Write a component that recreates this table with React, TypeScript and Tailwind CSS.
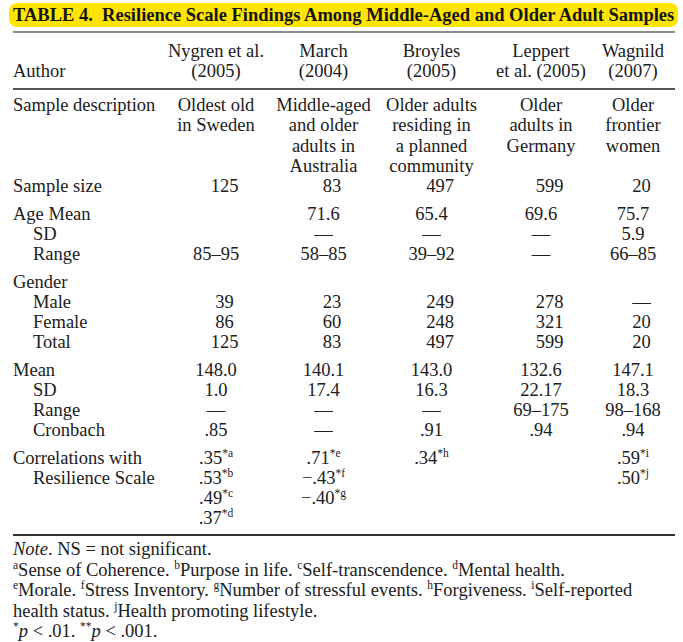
import React from "react";

const W = ["w-[108px]", "w-[107px]", "w-[109px]", "w-[110px]", "w-[74px]"];

function Sup({ children }: { children: React.ReactNode }) {
  return <sup className="text-[11.5px] leading-none relative top-[-7px] align-baseline">{children}</sup>;
}

type Cell = React.ReactNode;

function Row({
  label,
  indent,
  cells,
  shift,
}: {
  label: React.ReactNode;
  indent?: boolean;
  cells: Cell[];
  shift?: boolean;
}) {
  return (
    <div className="flex h-[20px] items-center">
      <div className={`w-[149px] shrink-0 whitespace-nowrap ${indent ? "pl-[20px]" : ""}`}>{label}</div>
      {cells.map((c, i) => (
        <div key={i} className={`${W[i]} shrink-0 text-center whitespace-nowrap ${shift ? "pl-[17px]" : ""}`}>
          {c}
        </div>
      ))}
    </div>
  );
}

const D = "—";

export default function App() {
  return (
    <div
      className="w-[683px] h-[642px] bg-white text-[#202020] text-[18.5px] leading-[20px] overflow-hidden"
      style={{ fontFamily: '"Liberation Serif", "Times New Roman", serif' }}
    >
      <div className="pt-[3px] pl-[9px] pr-[5px]">
        <div className="h-[24px] bg-[#ffe500] rounded-[8px] flex items-center pl-[4px] font-bold text-[18.5px] whitespace-nowrap text-[#141414]">
          TABLE 4.&nbsp; Resilience Scale Findings Among Middle-Aged and Older Adult Samples
        </div>
      </div>
      <div className="px-[13px] pr-[8px]">
        <div className="mt-[4px] h-[2px] bg-[#8c8c8c]" />
        {/* header */}
        <div className="flex items-end pt-[8px] pb-[7px]">
          <div className="w-[149px] shrink-0">Author</div>
          <div className={`${W[0]} shrink-0 text-center whitespace-nowrap`}>Nygren et al.<br />(2005)</div>
          <div className={`${W[1]} shrink-0 text-center whitespace-nowrap`}>March<br />(2004)</div>
          <div className={`${W[2]} shrink-0 text-center whitespace-nowrap`}>Broyles<br />(2005)</div>
          <div className={`${W[3]} shrink-0 text-center whitespace-nowrap`}>Leppert<br />et al. (2005)</div>
          <div className={`${W[4]} shrink-0 text-center whitespace-nowrap`}>Wagnild<br />(2007)</div>
        </div>
        <div className="h-[2px] bg-[#555]" />
        <div className="pt-[5px]">
          <div className="flex items-start leading-[20.3px]">
            <div className="w-[149px] shrink-0 whitespace-nowrap">Sample description</div>
            <div className={`${W[0]} shrink-0 text-center whitespace-nowrap`}>Oldest old<br />in Sweden</div>
            <div className={`${W[1]} shrink-0 text-center whitespace-nowrap`}>Middle-aged<br />and older<br />adults in<br />Australia</div>
            <div className={`${W[2]} shrink-0 text-center whitespace-nowrap`}>Older adults<br />residing in<br />a planned<br />community</div>
            <div className={`${W[3]} shrink-0 text-center whitespace-nowrap`}>Older<br />adults in<br />Germany</div>
            <div className={`${W[4]} shrink-0 text-center whitespace-nowrap`}>Older<br />frontier<br />women</div>
          </div>
          <Row label="Sample size" shift cells={["125", "83", "497", "599", "20"]} />
          <div className="mt-[8px]">
            <Row label="Age Mean" cells={["", "71.6", "65.4", "69.6", "75.7"]} />
            <Row label="SD" indent cells={["", D, D, D, "5.9"]} />
            <Row label="Range" indent cells={["85–95", "58–85", "39–92", D, "66–85"]} />
          </div>
          <div className="mt-[8px]">
            <Row label="Gender" cells={["", "", "", "", ""]} />
            <Row label="Male" indent shift cells={["39", "23", "249", "278", D]} />
            <Row label="Female" indent shift cells={["86", "60", "248", "321", "20"]} />
            <Row label="Total" indent shift cells={["125", "83", "497", "599", "20"]} />
          </div>
          <div className="mt-[8px]">
            <Row label="Mean" cells={["148.0", "140.1", "143.0", "132.6", "147.1"]} />
            <Row label="SD" indent cells={["1.0", "17.4", "16.3", "22.17", "18.3"]} />
            <Row label="Range" indent cells={[D, D, D, "69–175", "98–168"]} />
            <Row label="Cronbach" indent cells={[".85", D, ".91", ".94", ".94"]} />
          </div>
          <div className="mt-[8px]">
            <Row
              label="Correlations with"
              cells={[
                <>.35<Sup>*a</Sup></>,
                <>.71<Sup>*e</Sup></>,
                <>.34<Sup>*h</Sup></>,
                "",
                <>.59<Sup>*i</Sup></>,
              ]}
            />
            <Row
              label="Resilience Scale"
              indent
              cells={[
                <>.53<Sup>*b</Sup></>,
                <>−.43<Sup>*f</Sup></>,
                "",
                "",
                <>.50<Sup>*j</Sup></>,
              ]}
            />
            <Row label="" cells={[<>.49<Sup>*c</Sup></>, <>−.40<Sup>*g</Sup></>, "", "", ""]} />
            <Row label="" cells={[<>.37<Sup>*d</Sup></>, "", "", "", ""]} />
          </div>
        </div>
        <div className="mt-[6px] h-[2px] bg-[#333]" />
        <div className="pt-[3px] leading-[20.5px] whitespace-nowrap">
          <div><i>Note</i>. NS = not significant.</div>
          <div>
            <Sup>a</Sup>Sense of Coherence. <Sup>b</Sup>Purpose in life. <Sup>c</Sup>Self-transcendence. <Sup>d</Sup>Mental health.
          </div>
          <div>
            <Sup>e</Sup>Morale. <Sup>f</Sup>Stress Inventory. <Sup>g</Sup>Number of stressful events. <Sup>h</Sup>Forgiveness. <Sup>i</Sup>Self-reported
          </div>
          <div>
            health status. <Sup>j</Sup>Health promoting lifestyle.
          </div>
          <div>
            <Sup>*</Sup><i>p</i> &lt; .01. <Sup>**</Sup><i>p</i> &lt; .001.
          </div>
        </div>
      </div>
    </div>
  );
}
